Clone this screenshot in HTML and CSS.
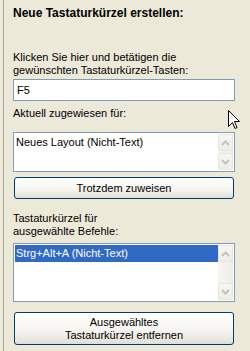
FILE: index.html
```html
<!DOCTYPE html>
<html>
<head>
<meta charset="utf-8">
<link rel="stylesheet" href="styles.css">
</head>
<body>
<div class="panel">
  <div class="title">Neue Tastaturkürzel erstellen:</div>
  <div class="label first">Klicken Sie hier und betätigen die<br>gewünschten Tastaturkürzel-Tasten:</div>
  <div class="input">F5</div>
  <div class="label l2">Aktuell zugewiesen für:</div>
  <div class="list list1">
    <div class="items"><div class="item">Neues Layout (Nicht-Text)</div></div>
    <div class="sb">
      <div class="sbtn"><svg width="9" height="6" viewBox="0 0 9 6"><path d="M1 5 L4.5 1.5 L8 5" fill="none" stroke="#c4c2b8" stroke-width="2"/></svg></div>
      <div class="track"></div>
      <div class="sbtn"><svg width="9" height="6" viewBox="0 0 9 6"><path d="M1 1 L4.5 4.5 L8 1" fill="none" stroke="#c4c2b8" stroke-width="2"/></svg></div>
    </div>
  </div>
  <button class="btn b1">Trotzdem zuweisen</button>
  <div class="label l3">Tastaturkürzel für<br>ausgewählte Befehle:</div>
  <div class="list list2">
    <div class="items"><div class="item sel">Strg+Alt+A (Nicht-Text)</div></div>
    <div class="sb">
      <div class="sbtn"><svg width="9" height="6" viewBox="0 0 9 6"><path d="M1 5 L4.5 1.5 L8 5" fill="none" stroke="#c4c2b8" stroke-width="2"/></svg></div>
      <div class="track"></div>
      <div class="sbtn"><svg width="9" height="6" viewBox="0 0 9 6"><path d="M1 1 L4.5 4.5 L8 1" fill="none" stroke="#c4c2b8" stroke-width="2"/></svg></div>
    </div>
  </div>
  <button class="btn b2">Ausgewähltes<br>Tastaturkürzel entfernen</button>
</div>
<svg class="cursor" width="13" height="21" viewBox="0 0 13 21"><path d="M0.5 0.5 L0.5 16.5 L4.5 12.5 L7 18.5 L9 17.5 L6.5 11.5 L11.5 11.5 Z" fill="#fff" stroke="#000" stroke-width="1"/></svg>
</body>
</html>
```
FILE: styles.css
```css
html, body {
  margin: 0;
  padding: 0;
  background: #ece9d8;
  width: 250px;
  height: 351px;
  overflow: hidden;
  position: relative;
}
.panel {
  margin-left: 3px;
  height: 351px;
  box-sizing: border-box;
  border-left: 1px solid #aca899;
  padding: 7px 15px 0 9px;
  font-family: "Liberation Sans", Arial, sans-serif;
  font-size: 11px;
  line-height: 13px;
  color: #000;
}
.title {
  font-weight: bold;
  font-size: 12px;
}
.label.first { margin-top: 31px; }
.label.l2 { margin-top: 6px; }
.label.l3 { margin-top: 13px; }
.input {
  margin-top: 2px;
  height: 22px;
  box-sizing: border-box;
  border: 1px solid #7f9db9;
  background: #fff;
  padding: 4px 3px;
}
.list {
  box-sizing: border-box;
  border: 1px solid #7f9db9;
  background: #fff;
  display: flex;
  padding: 1px;
}
.list1 { margin-top: 12px; height: 40px; }
.list2 { margin-top: 5px; height: 59px; }
.items { flex: 1; }
.item {
  height: 17px;
  line-height: 17px;
  padding-left: 1px;
  white-space: nowrap;
}
.item.sel {
  background: #316ac5;
  color: #fff;
}
.sb {
  width: 15px;
  display: flex;
  flex-direction: column;
  background: linear-gradient(to right, #f7f6f3, #eeede5);
}
.sbtn {
  height: 17px;
  box-sizing: border-box;
  border: 1px solid #e8e6dd;
  border-radius: 2px;
  background: linear-gradient(to bottom, #f7f6f3, #eeede6);
  display: flex;
  align-items: center;
  justify-content: center;
}
.track { flex: 1; }
.btn {
  display: block;
  margin-left: 1px;
  width: 220px;
  box-sizing: border-box;
  border: 1px solid #003c74;
  border-radius: 3px;
  background: linear-gradient(to bottom, #ffffff 0%, #f4f3ee 60%, #e0dfd7 100%);
  font-family: inherit;
  font-size: 11px;
  line-height: 13px;
  color: #000;
  padding: 0;
}
.b1 { margin-top: 5px; height: 22px; }
.b2 { margin-top: 10px; height: 33px; }
.cursor {
  position: absolute;
  left: 228px;
  top: 110px;
}
```
